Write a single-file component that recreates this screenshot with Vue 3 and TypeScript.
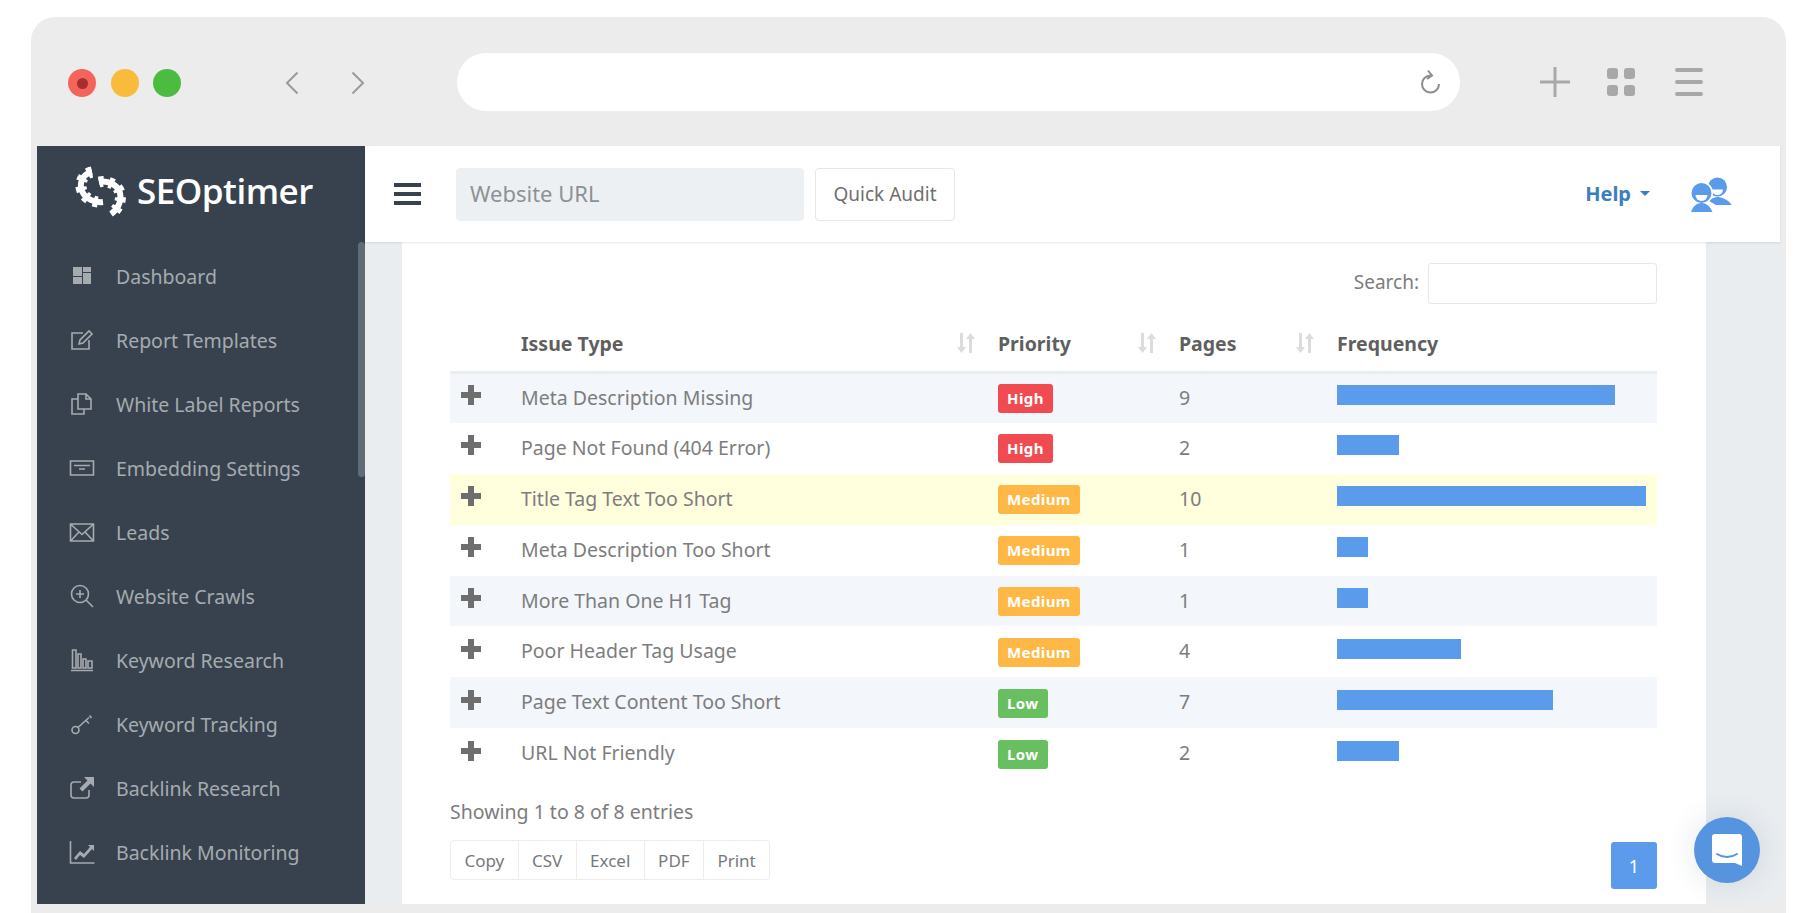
<template>
  <div class="frame">
    <header class="chrome">
      <div class="lights">
        <span class="light light--red"><i /></span>
        <span class="light light--amber" />
        <span class="light light--green" />
      </div>
      <div class="arrows">
        <svg width="14" height="24" viewBox="0 0 14 24"><path d="M12.5 1.5 2 12l10.5 10.5" /></svg>
        <svg width="14" height="24" viewBox="0 0 14 24"><path d="M1.5 1.5 12 12 1.5 22.5" /></svg>
      </div>
      <div class="address">
        <svg width="22" height="26" viewBox="0 0 22 26"><path d="M10.500 6.500a8.500 8.500 0 1 0 8.500 8.500M8 1.500l4 5-5 3.500" /></svg>
      </div>
      <div class="tools">
        <svg class="tool" width="30" height="30" viewBox="0 0 30 30"><path d="M1 15h28M15 1v28" /></svg>
        <div class="grid-icon"><i /><i /><i /><i /></div>
        <div class="lines-icon"><i /><i /><i /></div>
      </div>
    </header>

    <div class="app">
      <aside class="sidebar">
        <div class="brand">
          <svg class="brand__mark" width="67" height="65" viewBox="0 0 67 65">
            <g fill="none" stroke="#fff" stroke-linecap="butt">
              <path stroke-width="6" d="M22 12C12 14 9 24 12 31c3 8 13 12 21 11" />
              <path stroke-width="11" stroke-dasharray="4.500 5.500" d="M22 12C12 14 9 24 12 31c3 8 13 12 21 11" />
              <path stroke-width="6" d="M29 22c9-2 19 3 21 11 2 9-3 17-9 21" />
              <path stroke-width="11" stroke-dasharray="4.500 5.500" d="M29 22c9-2 19 3 21 11 2 9-3 17-9 21" />
            </g>
          </svg>
          <span class="brand__name">SEOptimer</span>
        </div>
        <nav class="nav">
          <a v-for="item in navItems" :key="item.label" class="nav__item">
            <svg class="nav__icon" width="26" height="26" viewBox="0 0 26 26">
              <path v-if="item.line" class="nav__line" :d="item.line" />
              <path v-if="item.solid" class="nav__solid" :d="item.solid" />
            </svg>
            {{ item.label }}
          </a>
        </nav>
        <div class="sidebar__thumb" />
      </aside>

      <main class="main">
        <div class="topbar">
          <div class="burger"><i /><i /><i /></div>
          <div class="url-field">Website URL</div>
          <button class="audit-btn">Quick Audit</button>
          <div class="topbar__right">
            <span class="help">Help<i class="help__caret" /></span>
            <svg class="people" width="44" height="37" viewBox="10 6 44 37">
              <circle cx="37.500" cy="17" r="9.500" fill="#5b9bec" />
              <path d="M29 31c3-3 6-4 8.500-4s9 1 14.500 8H36z" fill="#5b9bec" />
              <path d="M32 19.500h11a5.500 5.500 0 0 1-11 0z" fill="#fff" />
              <circle cx="21.500" cy="23" r="11.500" fill="#fff" />
              <circle cx="21.500" cy="23" r="10" fill="#5b9bec" />
              <path d="M15.500 25h12a6 6 0 0 1-12 0z" fill="#fff" />
              <path d="M11 42c2-6 6-9 10.500-9s8.500 3 11 9z" fill="#5b9bec" />
            </svg>
          </div>
        </div>

        <section class="content">
          <div class="panel">
            <div class="search">
              <label class="search__label">Search:</label>
              <div class="search__input" />
            </div>

            <table class="issues">
              <colgroup>
                <col class="col-toggle" />
                <col class="col-type" />
                <col class="col-priority" />
                <col class="col-pages" />
                <col />
              </colgroup>
              <thead>
                <tr>
                  <th />
                  <th v-for="col in sortableColumns" :key="col">
                    <div class="th-inner">
                      {{ col }}
                      <svg class="sort" width="22" height="22" viewBox="0 0 22 22">
                        <path d="M5 1h3v14h3l-4.500 6L2 15h3zM14 7h-3l4.500-6L20 7h-3v14h-3z" />
                      </svg>
                    </div>
                  </th>
                  <th>Frequency</th>
                </tr>
              </thead>
              <tbody>
                <tr v-for="(row, i) in rows" :key="row.name" :class="rowClass(i)">
                  <td><span class="plus" /></td>
                  <td>{{ row.name }}</td>
                  <td><span class="badge" :class="`badge--${row.priority.toLowerCase()}`">{{ row.priority }}</span></td>
                  <td>{{ row.pages }}</td>
                  <td><div class="bar" :style="{ width: `${row.pages * 30.9}px` }" /></td>
                </tr>
              </tbody>
            </table>

            <div class="footer">
              <div class="footer__left">
                <div class="info">Showing 1 to 8 of 8 entries</div>
                <div class="exports">
                  <button v-for="name in exportButtons" :key="name" class="exports__btn">{{ name }}</button>
                </div>
              </div>
              <button class="page-btn">1</button>
            </div>
          </div>
        </section>
      </main>
    </div>

    <button class="chat" aria-label="Chat">
      <svg width="32" height="34" viewBox="0 0 32 34">
        <path d="M4 1h24a3 3 0 0 1 3 3v29l-7-3H4a3 3 0 0 1-3-3V4a3 3 0 0 1 3-3z" fill="#fff" />
        <path d="M6 21c6 4 14 4 20 0" fill="none" stroke="#5694e0" stroke-width="2" stroke-linecap="round" />
      </svg>
    </button>
  </div>
</template>

<script setup lang="ts">
interface NavItem {
  label: string
  line?: string
  solid?: string
}

interface IssueRow {
  name: string
  priority: 'High' | 'Medium' | 'Low'
  pages: number
}

const navItems: NavItem[] = [
  { label: 'Dashboard', solid: 'M4 4h9v9H4zM14 4h8v5h-8zM4 14h9v7H4zM14 10h8v11h-8z' },
  { label: 'Report Templates', line: 'M20 13v9H3V6h11M10 17l1-4 9-9 3 3-9 9z' },
  { label: 'White Label Reports', line: 'M9 8H3v15h12v-5M9 18V3h8l5 5v10zM17 3v5h5' },
  { label: 'Embedding Settings', line: 'M1.500 6h23v14h-23zM5 10.500h16M10 14h6' },
  { label: 'Leads', line: 'M1.500 5h23v17h-23zM2 5.500l11 10 11-10M2 21.500l8-8.500M24 21.500l-8-8.500' },
  { label: 'Website Crawls', line: 'M11 2.500a8.500 8.500 0 1 0 0 17 8.500 8.500 0 0 0 0-17zM17 17l7 7M11 7v8M7 11h8' },
  { label: 'Keyword Research', line: 'M2 23.500h22M3.500 21V3h3.500v18zM9 21V7h3v14zM14 21v-9h3v9zM19 21v-7h4v7z' },
  { label: 'Keyword Tracking', line: 'M6.500 15.500a3.500 3.500 0 1 0 0 7 3.500 3.500 0 0 0 0-7zM9 16.500 20 6.500M17 9.500l3 3M20.500 4.500l2 2.500' },
  { label: 'Backlink Research', line: 'M20 15v5a3 3 0 0 1-3 3H5a3 3 0 0 1-3-3V10a3 3 0 0 1 3-3h7', solid: 'M15 2h10v10l-3.500-3.500-8 8-3-3 8-8z' },
  { label: 'Backlink Monitoring', line: 'M1.500 2v22h24', solid: 'M5 19l6-7 4 3 6-7-2-2h6v6l-2-2-8 9-4-3-4 5z' },
]

const sortableColumns = ['Issue Type', 'Priority', 'Pages']

const rows: IssueRow[] = [
  { name: 'Meta Description Missing', priority: 'High', pages: 9 },
  { name: 'Page Not Found (404 Error)', priority: 'High', pages: 2 },
  { name: 'Title Tag Text Too Short', priority: 'Medium', pages: 10 },
  { name: 'Meta Description Too Short', priority: 'Medium', pages: 1 },
  { name: 'More Than One H1 Tag', priority: 'Medium', pages: 1 },
  { name: 'Poor Header Tag Usage', priority: 'Medium', pages: 4 },
  { name: 'Page Text Content Too Short', priority: 'Low', pages: 7 },
  { name: 'URL Not Friendly', priority: 'Low', pages: 2 },
]

const exportButtons = ['Copy', 'CSV', 'Excel', 'PDF', 'Print']

const rowClass = (index: number) => {
  if (index === 2) return 'row--highlight'
  return index % 2 === 0 ? 'row--striped' : ''
}
</script>

<style>
html,
body {
  margin: 0;
  background: #fff;
  overflow: hidden;
}
</style>

<style scoped>
.frame {
  position: relative;
  box-sizing: border-box;
  width: 1755px;
  height: 896px;
  margin: 17px 0 0 31px;
  padding-bottom: 9px;
  display: flex;
  flex-direction: column;
  background: #ececec;
  border-radius: 24px 24px 0 0;
  overflow: hidden;
  font-family: "Noto Sans", "Open Sans", sans-serif;
  color: #7d7d7d;
}

/* browser chrome */
.chrome {
  flex: 0 0 129px;
  display: flex;
  align-items: flex-start;
  padding-top: 36px;
  box-sizing: border-box;
}

.lights {
  display: flex;
  align-items: center;
  gap: 14.500px;
  margin: 16px 0 0 37px;
}

.light {
  width: 28px;
  height: 28px;
  border-radius: 50%;
  display: flex;
  align-items: center;
  justify-content: center;
}

.light i {
  width: 11px;
  height: 11px;
  border-radius: 50%;
  background: #a92e2b;
}

.light--red { background: #f4645c; }
.light--amber { background: #f8bb3b; }
.light--green { background: #4cbc41; }

.arrows {
  display: flex;
  gap: 52px;
  margin: 18px 0 0 104px;
}

.arrows path {
  fill: none;
  stroke: #9a9a9a;
  stroke-width: 2;
}

.address {
  width: 1003px;
  height: 58px;
  margin-left: 92px;
  border-radius: 29px;
  background: #fff;
  display: flex;
  align-items: center;
  justify-content: flex-end;
  padding-right: 18px;
  box-sizing: border-box;
}

.address path {
  fill: none;
  stroke: #8d8d8d;
  stroke-width: 2;
}

.tools {
  display: flex;
  align-items: center;
  margin: 14px 0 0 80px;
}

.tool path {
  fill: none;
  stroke: #a8a8a8;
  stroke-width: 3;
  stroke-linecap: round;
}

.grid-icon {
  display: grid;
  grid-template-columns: 11px 11px;
  grid-auto-rows: 11px;
  gap: 6px;
  margin-left: 37px;
}

.grid-icon i {
  background: #a8a8a8;
  border-radius: 3px;
}

.lines-icon {
  display: flex;
  flex-direction: column;
  gap: 8px;
  margin-left: 40px;
}

.lines-icon i {
  width: 28px;
  height: 4px;
  border-radius: 2px;
  background: #a8a8a8;
}

.app {
  flex: 1;
  display: flex;
  min-height: 0;
  margin: 0 6px;
}

/* sidebar */
.sidebar {
  position: relative;
  flex: 0 0 328px;
  background: #37424e;
}

.brand {
  display: flex;
  align-items: center;
  height: 65px;
  padding: 14px 0 0 33px;
}

.brand__name {
  margin-top: -4px;
  font-family: "Open Sans", sans-serif;
  font-size: 35px;
  font-weight: 600;
  letter-spacing: -0.5px;
  color: #fff;
}

.nav {
  margin-top: 19px;
}

.nav__item {
  display: flex;
  align-items: center;
  height: 64px;
  padding-left: 32px;
  font-size: 19.500px;
  color: #a6abaf;
}

.nav__icon {
  margin-right: 21px;
}

.nav__line {
  fill: none;
  stroke: #a6abaf;
  stroke-width: 1.600;
}

.nav__solid {
  fill: #a6abaf;
}

.sidebar__thumb {
  position: absolute;
  top: 96px;
  right: 0;
  width: 7px;
  height: 235px;
  border-radius: 4px;
  background: #5f6c76;
}

/* main area */
.main {
  flex: 1;
  min-width: 0;
  display: flex;
  flex-direction: column;
}

.topbar {
  position: relative;
  z-index: 1;
  flex: 0 0 96px;
  display: flex;
  align-items: center;
  padding: 0 46px 0 29px;
  background: #fff;
  box-shadow: 0 1px 2px rgba(0, 0, 0, 0.1);
}

.burger {
  display: flex;
  flex-direction: column;
  gap: 5px;
}

.burger i {
  width: 27px;
  height: 4px;
  background: #37424e;
}

.url-field {
  box-sizing: border-box;
  width: 348px;
  height: 53px;
  margin-left: 35px;
  padding-left: 14px;
  border-radius: 4px;
  background: #edf0f3;
  font-size: 22px;
  line-height: 51px;
  color: #8d9195;
}

.audit-btn {
  box-sizing: border-box;
  width: 140px;
  height: 53px;
  margin-left: 11px;
  border: 1px solid #e7e7e7;
  border-radius: 4px;
  background: #fff;
  font-family: inherit;
  font-size: 19px;
  color: #6f6f6f;
}

.topbar__right {
  margin-left: auto;
  display: flex;
  align-items: center;
}

.help {
  display: flex;
  align-items: center;
  margin-top: -2px;
  font-size: 20px;
  font-weight: 700;
  color: #3a7fc1;
}

.help__caret {
  width: 0;
  height: 0;
  margin-left: 9px;
  border: 5px solid transparent;
  border-top: 5px solid #3a7fc1;
  border-bottom: 0;
}

.people {
  margin-left: 40px;
}

.content {
  flex: 1;
  min-height: 0;
  padding: 0 74px 0 37px;
  background: #e9edf0;
}

.panel {
  box-sizing: border-box;
  height: 100%;
  padding: 21px 49px 0 48px;
  background: #fff;
}

.search {
  display: flex;
  justify-content: flex-end;
  align-items: center;
  gap: 9px;
}

.search__label {
  margin-top: -4px;
  font-size: 19px;
}

.search__input {
  box-sizing: border-box;
  width: 229px;
  height: 41px;
  border: 1px solid #e7e7e7;
  border-radius: 3px;
}

.issues {
  width: 100%;
  table-layout: fixed;
  border-collapse: collapse;
  font-size: 19.500px;
}

.col-toggle { width: 71px; }
.col-type { width: 477px; }
.col-priority { width: 181px; }
.col-pages { width: 158px; }

.issues th {
  height: 68px;
  padding: 13px 0 0;
  box-sizing: border-box;
  border-bottom: 3px solid #ebeef1;
  text-align: left;
  font-size: 19.500px;
  font-weight: 700;
  color: #5f5f5f;
}

.th-inner {
  display: flex;
  align-items: center;
  justify-content: space-between;
  padding-right: 21px;
}

.sort {
  flex: none;
  margin-top: -2px;
}

.sort path {
  fill: #dcdcdc;
}

.issues td {
  height: 50.900px;
  padding: 0 0 2px;
  box-sizing: border-box;
}

.row--striped td { background: #f3f6fa; }
.row--highlight td { background: #fffedd; }

.plus {
  display: block;
  width: 20px;
  height: 20px;
  margin: -4px 0 0 11px;
  background:
    linear-gradient(#6e6e6e, #6e6e6e) center / 100% 6px no-repeat,
    linear-gradient(#6e6e6e, #6e6e6e) center / 6px 100% no-repeat;
  border-radius: 1px;
}

.badge {
  display: inline-block;
  box-sizing: border-box;
  height: 29px;
  margin-top: 3px;
  padding: 0 9px;
  border-radius: 3px;
  font-size: 15px;
  font-weight: 700;
  line-height: 29px;
  letter-spacing: 0.4px;
  color: #fff;
  vertical-align: middle;
}

.badge--high { background: #ef4b50; }
.badge--medium { background: #ffb845; }
.badge--low { background: #68bf5f; }

.bar {
  height: 20px;
  margin-top: -4px;
  background: #5b9bec;
}

.footer {
  display: flex;
  justify-content: space-between;
  align-items: flex-end;
}

.info {
  margin-top: 20px;
  font-size: 19.500px;
  line-height: 26px;
}

.footer__left {
  padding-bottom: 9px;
}

.exports {
  display: inline-flex;
  margin-top: 15px;
  height: 40px;
  border: 1px solid #ececec;
  border-radius: 4px;
  box-sizing: border-box;
}

.exports__btn {
  padding: 0 13.400px;
  border: 0;
  border-right: 1px solid #ececec;
  background: none;
  font-family: inherit;
  font-size: 17px;
  color: #75797d;
}

.exports__btn:last-child {
  border-right: 0;
}

.page-btn {
  width: 46px;
  height: 47px;
  border: 0;
  border-radius: 3px;
  background: #5c9bec;
  font-family: inherit;
  font-size: 18px;
  color: #fff;
}

.chat {
  position: absolute;
  right: 26px;
  bottom: 30px;
  width: 66px;
  height: 66px;
  padding: 0;
  border: 0;
  border-radius: 50%;
  background: #5694e0;
  display: flex;
  align-items: center;
  justify-content: center;
  box-shadow: 0 0 30px rgba(60, 80, 110, 0.14);
}
</style>
